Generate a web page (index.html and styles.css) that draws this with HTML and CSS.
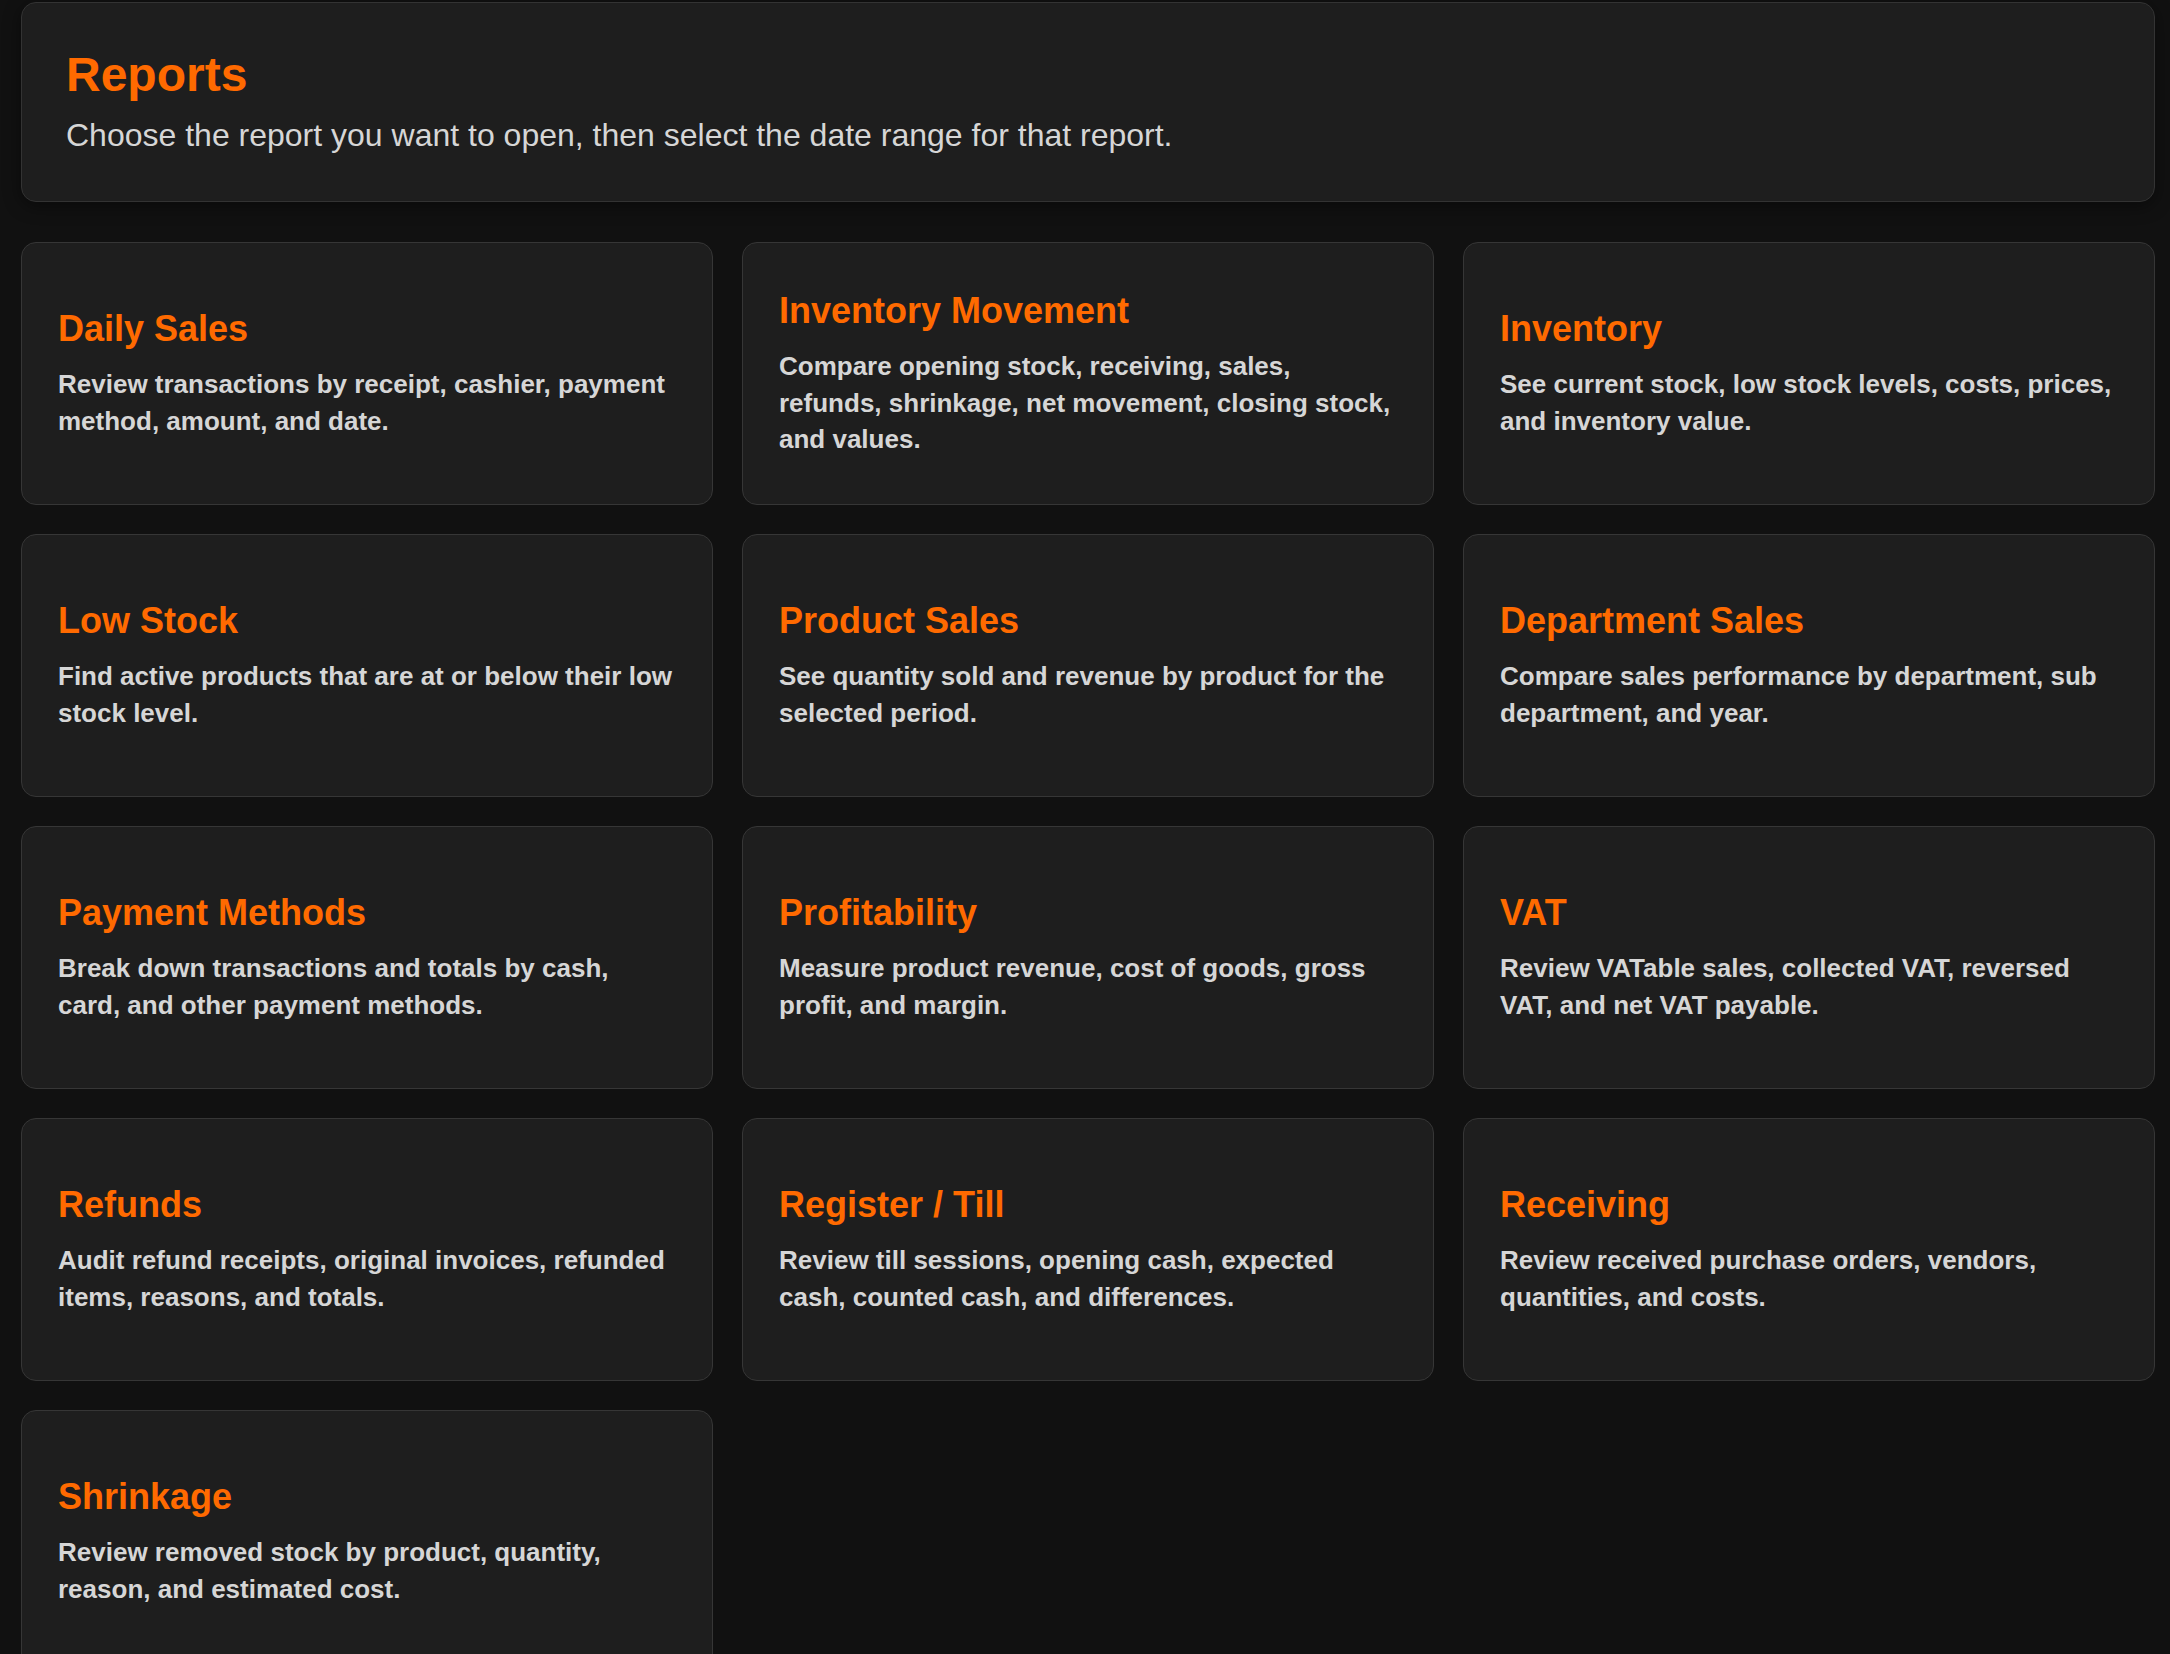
FILE: index.html
```html
<!DOCTYPE html>
<html lang="en">
<head>
    <meta charset="UTF-8">
    <meta name="viewport" content="width=device-width, initial-scale=1.0">
    <link rel="stylesheet" href="styles.css">
    <title>Reports</title>
</head>
<body>
    <div class="page">
        <header class="intro">
            <h1>Reports</h1>
            <p>Choose the report you want to open, then select the date range for that report.</p>
        </header>

        <div class="report-grid">
            <a class="report-card" href="#daily-sales">
                <h2>Daily Sales</h2>
                <p>Review transactions by receipt, cashier, payment method, amount, and date.</p>
            </a>
            <a class="report-card" href="#inventory-movement">
                <h2>Inventory Movement</h2>
                <p>Compare opening stock, receiving, sales, refunds, shrinkage, net movement, closing stock, and values.</p>
            </a>
            <a class="report-card" href="#inventory">
                <h2>Inventory</h2>
                <p>See current stock, low stock levels, costs, prices, and inventory value.</p>
            </a>
            <a class="report-card" href="#low-stock">
                <h2>Low Stock</h2>
                <p>Find active products that are at or below their low stock level.</p>
            </a>
            <a class="report-card" href="#product-sales">
                <h2>Product Sales</h2>
                <p>See quantity sold and revenue by product for the selected period.</p>
            </a>
            <a class="report-card" href="#department-sales">
                <h2>Department Sales</h2>
                <p>Compare sales performance by department, sub department, and year.</p>
            </a>
            <a class="report-card" href="#payment-methods">
                <h2>Payment Methods</h2>
                <p>Break down transactions and totals by cash, card, and other payment methods.</p>
            </a>
            <a class="report-card" href="#profitability">
                <h2>Profitability</h2>
                <p>Measure product revenue, cost of goods, gross profit, and margin.</p>
            </a>
            <a class="report-card" href="#vat">
                <h2>VAT</h2>
                <p>Review VATable sales, collected VAT, reversed VAT, and net VAT payable.</p>
            </a>
            <a class="report-card" href="#refunds">
                <h2>Refunds</h2>
                <p>Audit refund receipts, original invoices, refunded items, reasons, and totals.</p>
            </a>
            <a class="report-card" href="#register">
                <h2>Register / Till</h2>
                <p>Review till sessions, opening cash, expected cash, counted cash, and differences.</p>
            </a>
            <a class="report-card" href="#receiving">
                <h2>Receiving</h2>
                <p>Review received purchase orders, vendors, quantities, and costs.</p>
            </a>
            <a class="report-card" href="#shrinkage">
                <h2>Shrinkage</h2>
                <p>Review removed stock by product, quantity, reason, and estimated cost.</p>
            </a>
        </div>
    </div>
</body>
</html>
```

FILE: styles.css
```css
body{
    margin: 0;
    background-color: #111111;
    font-family: 'Liberation Sans', Arial, sans-serif;
}

.page{
    padding: 2px 15px 0 21px;
}

.intro{
    background-color: #1e1e1e;
    border: 1px solid #333333;
    border-radius: 15px;
    padding: 43px 43px 44px 44px;
    margin-bottom: 40px;
    box-shadow: 0 4px 18px rgba(0, 0, 0, 0.45);
}

.intro h1{
    margin: 0 0 10px;
    font-size: 48px;
    line-height: 1.2;
    color: #ff6a00;
}

.intro p{
    margin: 0;
    font-size: 32px;
    line-height: 1.35;
    color: #d6d6d6;
}

.report-grid{
    display: grid;
    grid-template-columns: repeat(3, 1fr);
    gap: 29px;
}

.report-card{
    height: 263px;
    box-sizing: border-box;
    display: flex;
    flex-direction: column;
    justify-content: center;
    padding: 0 38px 0 36px;
    background-color: #1e1e1e;
    border: 1px solid #363636;
    border-radius: 15px;
    text-decoration: none;
}

.report-card h2{
    margin: 0 0 16px;
    font-size: 36px;
    line-height: 1.2;
    color: #ff6a00;
}

.report-card p{
    margin: 0;
    font-size: 26px;
    font-weight: bold;
    line-height: 1.4;
    color: #d6d6d6;
}
```
